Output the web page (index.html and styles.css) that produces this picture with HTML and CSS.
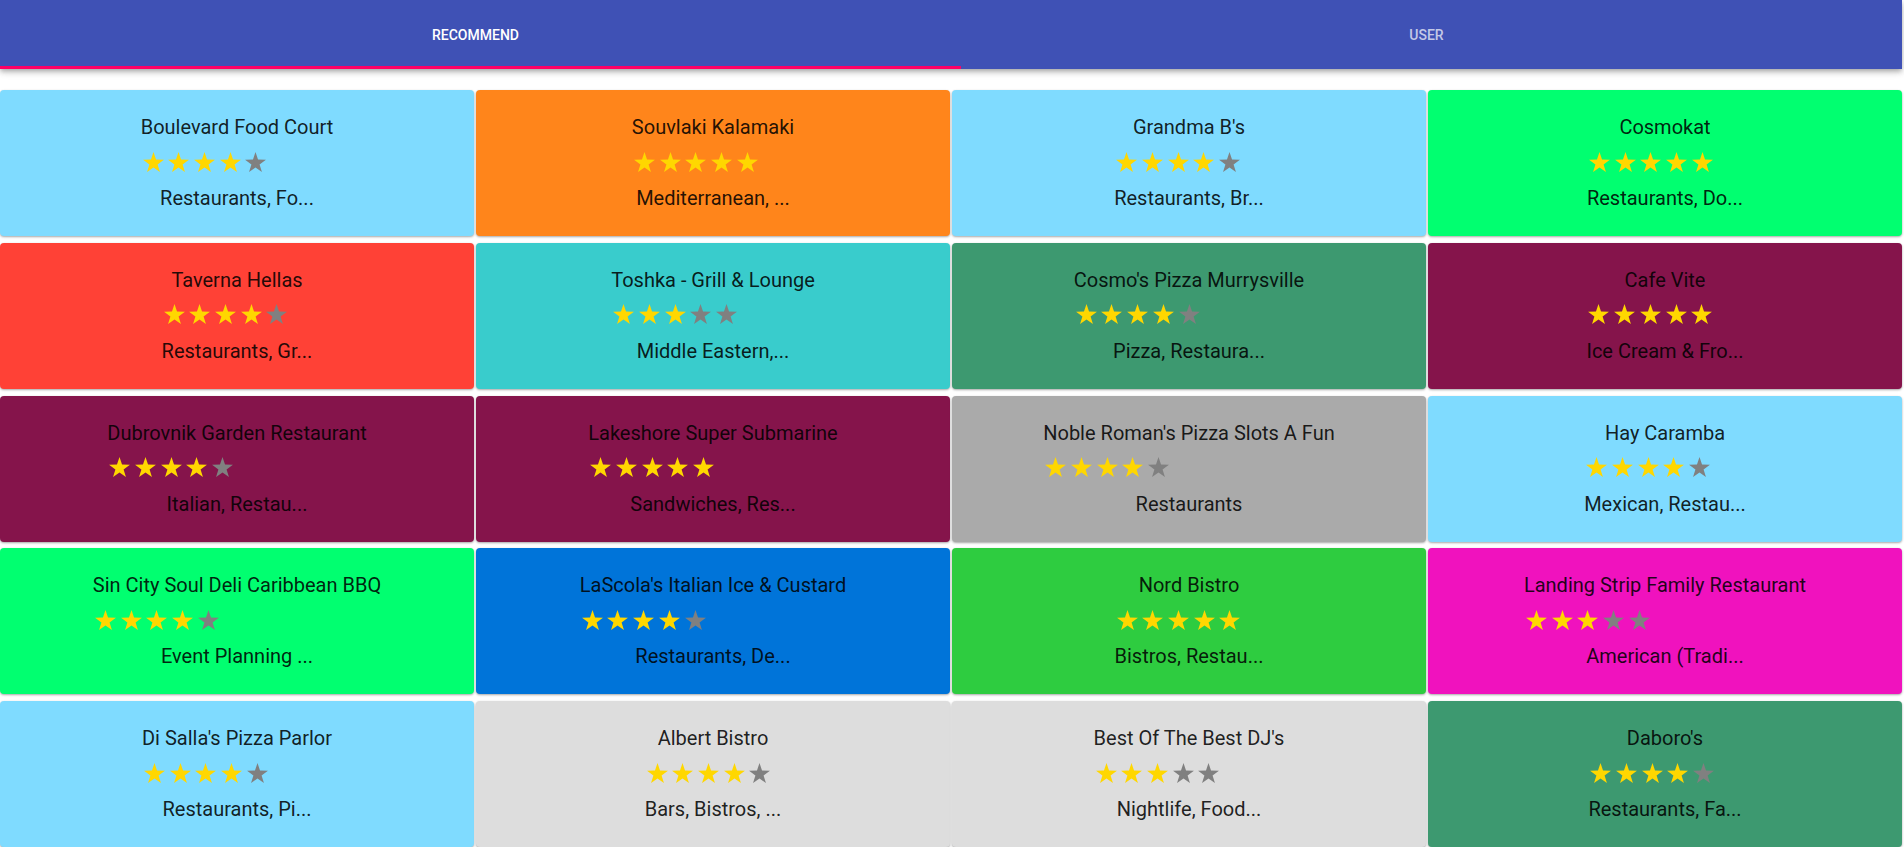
FILE: index.html
```html
<!DOCTYPE html>
<html lang="en">
<head>
<meta charset="utf-8">
<title>Recommend</title>
<link rel="stylesheet" href="styles.css">
</head>
<body>
<svg class="defs" width="0" height="0" aria-hidden="true">
  <symbol id="star" viewBox="0 0 24 23">
    <polygon points="12,0 14.9,8.6 24,8.8 16.7,14.3 19.4,23 12,17.8 4.6,23 7.3,14.3 0,8.8 9.1,8.6"/>
  </symbol>
</svg>
<div class="app">
  <header class="appbar">
    <nav class="tabs">
      <div class="tab active">RECOMMEND</div>
      <div class="tab">USER</div>
    </nav>
    <span class="indicator"></span>
  </header>

  <main class="grid">
    <div class="card aqua"><div class="info"><div class="title">Boulevard Food Court</div><div class="stars"><svg class="on"><use href="#star"/></svg><svg class="on"><use href="#star"/></svg><svg class="on"><use href="#star"/></svg><svg class="on"><use href="#star"/></svg><svg class="off"><use href="#star"/></svg></div><div class="cat">Restaurants, Fo...</div></div></div>
    <div class="card orange"><div class="info"><div class="title">Souvlaki Kalamaki</div><div class="stars"><svg class="on"><use href="#star"/></svg><svg class="on"><use href="#star"/></svg><svg class="on"><use href="#star"/></svg><svg class="on"><use href="#star"/></svg><svg class="on"><use href="#star"/></svg></div><div class="cat">Mediterranean, ...</div></div></div>
    <div class="card aqua"><div class="info"><div class="title">Grandma B's</div><div class="stars"><svg class="on"><use href="#star"/></svg><svg class="on"><use href="#star"/></svg><svg class="on"><use href="#star"/></svg><svg class="on"><use href="#star"/></svg><svg class="off"><use href="#star"/></svg></div><div class="cat">Restaurants, Br...</div></div></div>
    <div class="card lime"><div class="info"><div class="title">Cosmokat</div><div class="stars"><svg class="on"><use href="#star"/></svg><svg class="on"><use href="#star"/></svg><svg class="on"><use href="#star"/></svg><svg class="on"><use href="#star"/></svg><svg class="on"><use href="#star"/></svg></div><div class="cat">Restaurants, Do...</div></div></div>

    <div class="card red"><div class="info"><div class="title">Taverna Hellas</div><div class="stars"><svg class="on"><use href="#star"/></svg><svg class="on"><use href="#star"/></svg><svg class="on"><use href="#star"/></svg><svg class="on"><use href="#star"/></svg><svg class="off"><use href="#star"/></svg></div><div class="cat">Restaurants, Gr...</div></div></div>
    <div class="card teal"><div class="info"><div class="title">Toshka - Grill &amp; Lounge</div><div class="stars"><svg class="on"><use href="#star"/></svg><svg class="on"><use href="#star"/></svg><svg class="on"><use href="#star"/></svg><svg class="off"><use href="#star"/></svg><svg class="off"><use href="#star"/></svg></div><div class="cat">Middle Eastern,...</div></div></div>
    <div class="card olive"><div class="info"><div class="title">Cosmo's Pizza Murrysville</div><div class="stars"><svg class="on"><use href="#star"/></svg><svg class="on"><use href="#star"/></svg><svg class="on"><use href="#star"/></svg><svg class="on"><use href="#star"/></svg><svg class="off"><use href="#star"/></svg></div><div class="cat">Pizza, Restaura...</div></div></div>
    <div class="card maroon"><div class="info"><div class="title">Cafe Vite</div><div class="stars"><svg class="on"><use href="#star"/></svg><svg class="on"><use href="#star"/></svg><svg class="on"><use href="#star"/></svg><svg class="on"><use href="#star"/></svg><svg class="on"><use href="#star"/></svg></div><div class="cat">Ice Cream &amp; Fro...</div></div></div>

    <div class="card maroon"><div class="info"><div class="title">Dubrovnik Garden Restaurant</div><div class="stars"><svg class="on"><use href="#star"/></svg><svg class="on"><use href="#star"/></svg><svg class="on"><use href="#star"/></svg><svg class="on"><use href="#star"/></svg><svg class="off"><use href="#star"/></svg></div><div class="cat">Italian, Restau...</div></div></div>
    <div class="card maroon"><div class="info"><div class="title">Lakeshore Super Submarine</div><div class="stars"><svg class="on"><use href="#star"/></svg><svg class="on"><use href="#star"/></svg><svg class="on"><use href="#star"/></svg><svg class="on"><use href="#star"/></svg><svg class="on"><use href="#star"/></svg></div><div class="cat">Sandwiches, Res...</div></div></div>
    <div class="card gray"><div class="info"><div class="title">Noble Roman's Pizza Slots A Fun</div><div class="stars"><svg class="on"><use href="#star"/></svg><svg class="on"><use href="#star"/></svg><svg class="on"><use href="#star"/></svg><svg class="on"><use href="#star"/></svg><svg class="off"><use href="#star"/></svg></div><div class="cat">Restaurants</div></div></div>
    <div class="card aqua"><div class="info"><div class="title">Hay Caramba</div><div class="stars"><svg class="on"><use href="#star"/></svg><svg class="on"><use href="#star"/></svg><svg class="on"><use href="#star"/></svg><svg class="on"><use href="#star"/></svg><svg class="off"><use href="#star"/></svg></div><div class="cat">Mexican, Restau...</div></div></div>

    <div class="card lime"><div class="info"><div class="title">Sin City Soul Deli Caribbean BBQ</div><div class="stars"><svg class="on"><use href="#star"/></svg><svg class="on"><use href="#star"/></svg><svg class="on"><use href="#star"/></svg><svg class="on"><use href="#star"/></svg><svg class="off"><use href="#star"/></svg></div><div class="cat">Event Planning ...</div></div></div>
    <div class="card blue"><div class="info"><div class="title">LaScola's Italian Ice &amp; Custard</div><div class="stars"><svg class="on"><use href="#star"/></svg><svg class="on"><use href="#star"/></svg><svg class="on"><use href="#star"/></svg><svg class="on"><use href="#star"/></svg><svg class="off"><use href="#star"/></svg></div><div class="cat">Restaurants, De...</div></div></div>
    <div class="card green"><div class="info"><div class="title">Nord Bistro</div><div class="stars"><svg class="on"><use href="#star"/></svg><svg class="on"><use href="#star"/></svg><svg class="on"><use href="#star"/></svg><svg class="on"><use href="#star"/></svg><svg class="on"><use href="#star"/></svg></div><div class="cat">Bistros, Restau...</div></div></div>
    <div class="card fuchsia"><div class="info"><div class="title">Landing Strip Family Restaurant</div><div class="stars"><svg class="on"><use href="#star"/></svg><svg class="on"><use href="#star"/></svg><svg class="on"><use href="#star"/></svg><svg class="off"><use href="#star"/></svg><svg class="off"><use href="#star"/></svg></div><div class="cat">American (Tradi...</div></div></div>

    <div class="card aqua"><div class="info"><div class="title">Di Salla's Pizza Parlor</div><div class="stars"><svg class="on"><use href="#star"/></svg><svg class="on"><use href="#star"/></svg><svg class="on"><use href="#star"/></svg><svg class="on"><use href="#star"/></svg><svg class="off"><use href="#star"/></svg></div><div class="cat">Restaurants, Pi...</div></div></div>
    <div class="card silver"><div class="info"><div class="title">Albert Bistro</div><div class="stars"><svg class="on"><use href="#star"/></svg><svg class="on"><use href="#star"/></svg><svg class="on"><use href="#star"/></svg><svg class="on"><use href="#star"/></svg><svg class="off"><use href="#star"/></svg></div><div class="cat">Bars, Bistros, ...</div></div></div>
    <div class="card silver"><div class="info"><div class="title">Best Of The Best DJ's</div><div class="stars"><svg class="on"><use href="#star"/></svg><svg class="on"><use href="#star"/></svg><svg class="on"><use href="#star"/></svg><svg class="off"><use href="#star"/></svg><svg class="off"><use href="#star"/></svg></div><div class="cat">Nightlife, Food...</div></div></div>
    <div class="card olive"><div class="info"><div class="title">Daboro's</div><div class="stars"><svg class="on"><use href="#star"/></svg><svg class="on"><use href="#star"/></svg><svg class="on"><use href="#star"/></svg><svg class="on"><use href="#star"/></svg><svg class="off"><use href="#star"/></svg></div><div class="cat">Restaurants, Fa...</div></div></div>
  </main>
</div>
</body>
</html>
```

FILE: styles.css
```css
html, body {
  margin: 0;
  padding: 0;
  background: #ffffff;
}

body {
  font-family: Roboto, "Liberation Sans", Arial, sans-serif;
  color: rgba(0, 0, 0, 0.87);
}

.defs {
  position: absolute;
  width: 0;
  height: 0;
  overflow: hidden;
}

.app {
  width: 1902px;
}

.appbar {
  position: relative;
  height: 69px;
  background: #3f51b5;
  box-shadow: 0 2px 4px -1px rgba(0, 0, 0, 0.2), 0 4px 5px 0 rgba(0, 0, 0, 0.14), 0 1px 10px 0 rgba(0, 0, 0, 0.12);
  z-index: 2;
}

.tabs {
  display: flex;
  height: 100%;
}

.tab {
  flex: 1 1 0;
  display: flex;
  align-items: center;
  justify-content: center;
  font-size: 14px;
  font-weight: 500;
  color: rgba(255, 255, 255, 0.7);
  letter-spacing: 0;
}

.tab.active {
  color: #ffffff;
}

.indicator {
  position: absolute;
  left: 0;
  bottom: 0;
  width: 961px;
  height: 3px;
  background: #ff0066;
}

.grid {
  display: grid;
  grid-template-columns: repeat(4, 1fr);
  grid-auto-rows: 146px;
  column-gap: 2px;
  row-gap: 6.75px;
  margin-top: 21px;
}

.card {
  border-radius: 4px;
  box-shadow: 0 1px 3px rgba(0, 0, 0, 0.12), 0 1px 2px rgba(0, 0, 0, 0.24);
  display: flex;
  justify-content: center;
  align-items: flex-start;
  padding-top: 25px;
  box-sizing: border-box;
}

.info {
  display: flex;
  flex-direction: column;
  align-items: stretch;
  text-align: center;
}

.title {
  font-size: 20px;
  line-height: 24px;
  white-space: nowrap;
}

.stars {
  display: flex;
  gap: 4.7px;
  margin-top: 12.7px;
  padding-left: 2px;
  height: 20px;
}

.stars svg {
  width: 21px;
  height: 20px;
  display: block;
}

.stars .on {
  fill: #ffd700;
}

.stars .off {
  fill: #808080;
}

.cat {
  font-size: 20px;
  line-height: 24px;
  margin-top: 14.45px;
  white-space: nowrap;
}

.aqua { background: #7fdbff; }
.orange { background: #ff851b; }
.lime { background: #01ff70; }
.red { background: #ff4136; }
.teal { background: #39cccc; }
.olive { background: #3d9970; }
.maroon { background: #85144b; }
.gray { background: #aaaaaa; }
.blue { background: #0074d9; }
.green { background: #2ecc40; }
.fuchsia { background: #f012be; }
.silver { background: #dddddd; }
```
